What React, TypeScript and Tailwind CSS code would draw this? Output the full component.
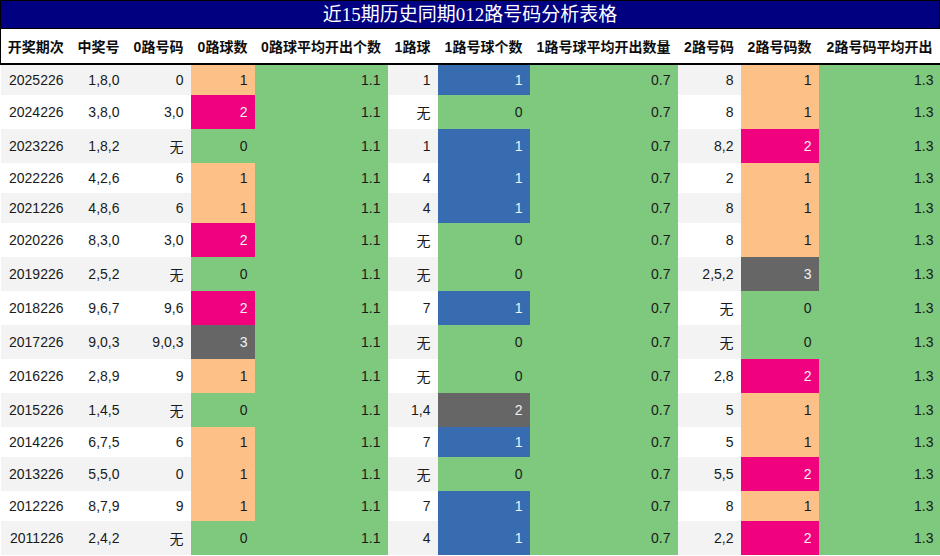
const rows: string[][] = [
  ['2025226', '1,8,0', '0', '1', '1.1', '1', '1', '0.7', '8', '1', '1.3'],
  ['2024226', '3,8,0', '3,0', '2', '1.1', '无', '0', '0.7', '8', '1', '1.3'],
  ['2023226', '1,8,2', '无', '0', '1.1', '1', '1', '0.7', '8,2', '2', '1.3'],
  ['2022226', '4,2,6', '6', '1', '1.1', '4', '1', '0.7', '2', '1', '1.3'],
  ['2021226', '4,8,6', '6', '1', '1.1', '4', '1', '0.7', '8', '1', '1.3'],
  ['2020226', '8,3,0', '3,0', '2', '1.1', '无', '0', '0.7', '8', '1', '1.3'],
  ['2019226', '2,5,2', '无', '0', '1.1', '无', '0', '0.7', '2,5,2', '3', '1.3'],
  ['2018226', '9,6,7', '9,6', '2', '1.1', '7', '1', '0.7', '无', '0', '1.3'],
  ['2017226', '9,0,3', '9,0,3', '3', '1.1', '无', '0', '0.7', '无', '0', '1.3'],
  ['2016226', '2,8,9', '9', '1', '1.1', '无', '0', '0.7', '2,8', '2', '1.3'],
  ['2015226', '1,4,5', '无', '0', '1.1', '1,4', '2', '0.7', '5', '1', '1.3'],
  ['2014226', '6,7,5', '6', '1', '1.1', '7', '1', '0.7', '5', '1', '1.3'],
  ['2013226', '5,5,0', '0', '1', '1.1', '无', '0', '0.7', '5,5', '2', '1.3'],
  ['2012226', '8,7,9', '9', '1', '1.1', '7', '1', '0.7', '8', '1', '1.3'],
  ['2011226', '2,4,2', '无', '0', '1.1', '4', '1', '0.7', '2,2', '2', '1.3'],
];

const headers = [
  '开奖期次', '中奖号', '0路号码', '0路球数', '0路球平均开出个数', '1路球',
  '1路号球个数', '1路号球平均开出数量', '2路号码', '2路号码数', '2路号码平均开出',
];

const widths = [70, 56, 64, 64, 133, 50, 92, 148, 63, 78, 122];

// accent palette, one scale per count column
const green = 'bg-[#7fc97f] text-[#1a1a1a]';
const orange = 'bg-[#fdc086] text-[#1a1a1a]';
const blue = 'bg-[#386cb0] text-[#f2f2f2]';
const pink = 'bg-[#f0027f] text-[#f2f2f2]';
const gray = 'bg-[#666666] text-[#f2f2f2]';

const scale02: Record<string, string> = { '0': green, '1': orange, '2': pink, '3': gray };
const scale1: Record<string, string> = { '0': green, '1': blue, '2': gray };

const cellColor = (col: number, value: string, stripe: string) => {
  if (col === 3 || col === 9) return scale02[value];
  if (col === 6) return scale1[value];
  if (col === 4 || col === 7 || col === 10) return green;
  return stripe;
};

export default function App() {
  return (
    <div className="w-[940px] h-[556px] overflow-hidden bg-white font-['Liberation_Sans','Noto_Sans_CJK_SC',sans-serif]">
      {/* Title */}
      <div className="h-[29px] border border-black bg-[#000080] text-white text-center text-[19px] leading-[27px] font-['Liberation_Serif','Noto_Sans_CJK_SC',serif]">
        近15期历史同期012路号码分析表格
      </div>

      <table className="table-fixed border-collapse w-[940px] text-[14px] leading-[normal]">
        <colgroup>
          {widths.map((w, i) => (
            <col key={i} style={{ width: w }} />
          ))}
        </colgroup>
        <thead>
          <tr className="border-b-2 border-black">
            {headers.map((h, i) => (
              <th
                key={h}
                className={`py-[7px] px-0 font-bold text-center text-[#0d0d0d] whitespace-nowrap ${i === 0 ? 'border-l border-black' : ''}`}
              >
                {h}
              </th>
            ))}
          </tr>
        </thead>
        <tbody>
          {rows.map((r, ri) => {
            const stripe = ri % 2 === 0 ? 'bg-[#f3f3f3] text-[#1a1a1a]' : 'bg-white text-[#1a1a1a]';
            return (
              <tr key={r[0]}>
                {r.map((v, ci) => (
                  <td
                    key={ci}
                    className={`py-[7px] pr-[7px] pl-0 text-right whitespace-nowrap ${cellColor(ci, v, stripe)}`}
                  >
                    {v}
                  </td>
                ))}
              </tr>
            );
          })}
        </tbody>
      </table>
    </div>
  );
}
